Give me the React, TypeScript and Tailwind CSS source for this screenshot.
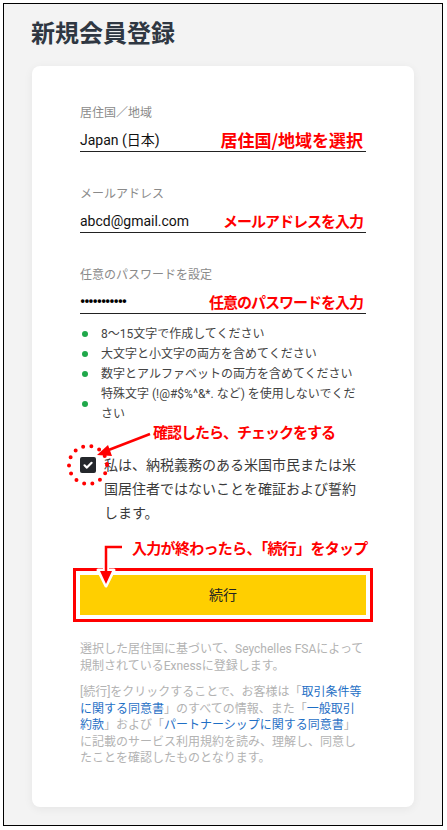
import React from "react";

const fields = [
  { label: "居住国／地域", value: "Japan (日本)", note: "居住国/地域を選択", noteCls: "text-[17px] tracking-[0px]" },
  { label: "メールアドレス", value: "abcd@gmail.com", note: "メールアドレスを入力", noteCls: "text-[15px] tracking-[-1px]" },
  { label: "任意のパスワードを設定", value: "•••••••••••", note: "任意のパスワードを入力", noteCls: "text-[15px] tracking-[-1px]", secret: true },
];

const rules = [
  "8〜15文字で作成してください",
  "大文字と小文字の両方を含めてください",
  "数字とアルファベットの両方を含めてください",
];

export default function App() {
  return (
    <div className="w-[447px] h-[830px] bg-white pt-[3px] pl-[3px] font-['Roboto','Noto_Sans_CJK_JP',sans-serif]">
      <div className="w-[440px] h-[823px] border border-black bg-[#f3f3f3]">
        <h1 className="pl-[27px] pt-[12px] text-[24px] leading-[32px] font-bold text-[#2f3742] font-['Noto_Sans_CJK_JP',sans-serif]">
          新規会員登録
        </h1>

        <div className="relative mt-[18px] ml-[28px] w-[382px] rounded-lg bg-white px-[48px] pt-[39px] pb-[40px] shadow-[0_2px_10px_rgba(0,0,0,0.06)]">
          <div className="flex flex-col gap-[34px]">
            {fields.map((f) => (
              <div key={f.label}>
                <div className="text-[12px] leading-[16px] text-[#8a8a8a]">{f.label}</div>
                <div className="mt-[9px] flex items-center justify-between border-b border-[#222] pb-[1px]">
                  <span
                    className={
                      f.secret
                        ? "text-[14px] leading-[20px] font-black text-black tracking-[-1px]"
                        : "text-[14px] leading-[20px] text-[#111]"
                    }
                  >
                    {f.value}
                  </span>
                  <span
                    className={`pr-[3px] leading-[20px] font-bold text-[#ff0000] font-['Noto_Sans_CJK_JP',sans-serif] ${f.noteCls}`}
                  >
                    {f.note}
                  </span>
                </div>
              </div>
            ))}
          </div>

          <ul className="mt-[10px] flex flex-col text-[12px] leading-[20px] text-[#444]">
            {rules.map((r) => (
              <li key={r} className="flex items-center gap-[13px] pl-[2px]">
                <span className="h-[6px] w-[6px] shrink-0 rounded-full bg-[#1fa84a]" />
                <span>{r}</span>
              </li>
            ))}
            <li className="flex items-center gap-[13px] pl-[2px]">
              <span className="h-[6px] w-[6px] shrink-0 rounded-full bg-[#1fa84a]" />
              <span>
                特殊文字 (!@#$%^&amp;*. など) を使用しないでくだ
                <br />
                さい
              </span>
            </li>
          </ul>

          <label className="mt-[29px] flex items-start gap-[8px]">
            <span className="mt-[4px] flex h-[16px] w-[16px] shrink-0 items-center justify-center rounded-[2px] bg-[#24272c]">
              <svg viewBox="0 0 16 16" className="h-[16px] w-[16px]">
                <path d="M4.5 8.3l2.4 2.3L11.6 5.8" fill="none" stroke="white" strokeWidth="2.2" strokeLinecap="round" strokeLinejoin="round" />
              </svg>
            </span>
            <span className="text-[14px] leading-[24px] text-[#3a3a3a]">
              私は、納税義務のある米国市民または米国居住者ではないことを確証および誓約します。
            </span>
          </label>

          <button className="mt-[50px] flex h-[40px] w-full items-center justify-center rounded-none bg-[#ffcf00] text-[14px] text-[#222] outline-3 outline-offset-[4px] outline-[#ff0000]">
            続行
          </button>

          <p className="mt-[26px] text-[12px] leading-[16.5px] text-[#b3b3b3]">
            選択した居住国に基づいて、Seychelles FSAによって
            <br />
            規制されているExnessに登録します。
          </p>
          <p className="mt-[10px] text-[12px] leading-[16.5px] text-[#b3b3b3]">
            [続行]をクリックすることで、お客様は「<span className="text-[#1f6fc5]">取引条件等</span>
            <br />
            <span className="text-[#1f6fc5]">に関する同意書</span>」のすべての情報、また「<span className="text-[#1f6fc5]">一般取引</span>
            <br />
            <span className="text-[#1f6fc5]">約款</span>」および「<span className="text-[#1f6fc5]">パートナーシップに関する同意書</span>」
            <br />
            に記載のサービス利用規約を読み、理解し、同意し
            <br />
            たことを確認したものとなります。
          </p>

          {/* annotations */}
          <span className="absolute left-[121px] top-[356px] text-[15px] leading-[20px] font-bold tracking-[-1px] text-[#ff0000] font-['Noto_Sans_CJK_JP',sans-serif]">
            確認したら、チェックをする
          </span>
          <span className="absolute left-[100px] top-[472px] text-[15px] leading-[20px] font-bold tracking-[-0.7px] text-[#ff0000] font-['Noto_Sans_CJK_JP',sans-serif]">
            入力が終わったら、「続行」をタップ
          </span>
          <svg className="pointer-events-none absolute left-0 top-0" width="382" height="740" viewBox="0 0 382 740">
            <circle cx="56" cy="399" r="19" fill="none" stroke="#ff0000" strokeWidth="4" strokeLinecap="round" strokeDasharray="0 8.4" />
            <line x1="118" y1="368" x2="74" y2="385" stroke="#ff0000" strokeWidth="2.5" />
            <polygon points="65,389 76,379 80,390" fill="#ff0000" />
            <polyline points="90,481 74,481 74,508" fill="none" stroke="white" strokeWidth="6" />
            <polygon points="66,504 82,504 74,520" fill="white" stroke="white" strokeWidth="3" strokeLinejoin="round" />
            <polyline points="90,481 74,481 74,508" fill="none" stroke="#ff0000" strokeWidth="2.5" />
            <polygon points="68,505 80,505 74,518" fill="#ff0000" />
          </svg>
        </div>
      </div>
    </div>
  );
}
